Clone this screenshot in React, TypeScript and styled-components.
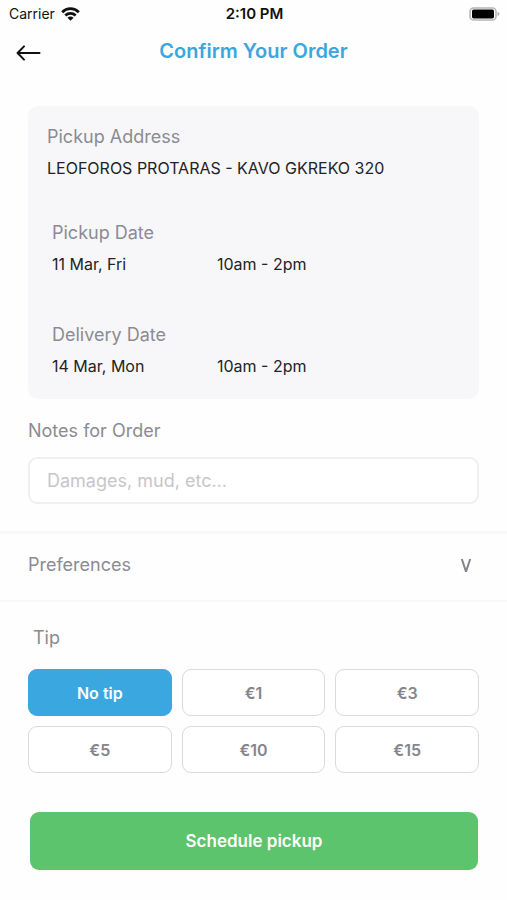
import React, { useState } from "react";
import styled, { createGlobalStyle } from "styled-components";

const GlobalStyle = createGlobalStyle`
  *, *::before, *::after { box-sizing: border-box; }
  body {
    margin: 0;
    background: #fefefe;
    color: #222326;
    font-family: Inter, "Liberation Sans", sans-serif;
    font-size: 16px;
    line-height: 24px;
  }
  button, input { font: inherit; color: inherit; }
`;

const StatusBar = styled.div`
  display: grid;
  grid-template-columns: 1fr auto 1fr;
  align-items: center;
  height: 28px;
  padding: 0 7px 0 9px;
  font-size: 14px;
  color: #111;
`;

const Carrier = styled.div`
  display: flex;
  align-items: center;
  gap: 6px;
`;

const Clock = styled.time`
  font-size: 15px;
  font-weight: 600;
`;

const Battery = styled.svg`
  justify-self: end;
`;

const Header = styled.header`
  display: grid;
  grid-template-columns: 48px 1fr 48px;
  align-items: center;
  height: 46px;
`;

const BackButton = styled.button`
  display: flex;
  align-items: center;
  justify-content: flex-end;
  height: 46px;
  padding: 4px 7px 0 0;
  border: 0;
  background: none;
  cursor: pointer;
`;

const Title = styled.h1`
  margin: 0;
  text-align: center;
  font-size: 20px;
  font-weight: 600;
  color: #3aa7dc;
`;

const Section = styled.section`
  padding: 0 28px;
`;

const Card = styled(Section)`
  display: flex;
  flex-direction: column;
  gap: 41px;
  margin: 32px 28px 0;
  padding: 19px 19px 21px;
  border-radius: 10px;
  background: #f7f7fa;
`;

const Group = styled.div`
  display: flex;
  flex-direction: column;
  gap: 7px;
`;

const Dates = styled.div`
  display: flex;
  flex-direction: column;
  gap: 47px;
  padding-left: 5px;
`;

const Label = styled.h2`
  margin: 0;
  font-size: 18px;
  font-weight: 400;
  color: #8b8b92;
`;

const Value = styled.div`
  font-size: 16px;
`;

const Slot = styled.div`
  display: grid;
  grid-template-columns: 2fr 3fr;
  column-gap: 3px;
`;

const FieldLabel = styled.label`
  display: block;
  margin: 20px 0 14px;
  font-size: 18px;
  color: #8b8b92;
`;

const NotesInput = styled.input`
  display: block;
  width: 100%;
  height: 47px;
  padding: 0 17px;
  border: 2px solid #efeff0;
  border-radius: 9px;
  background: #fff;
  font-size: 18px;
  outline: none;
  &::placeholder { color: #c6c6c9; opacity: 1; }
`;

const Preferences = styled.button`
  display: flex;
  align-items: center;
  justify-content: space-between;
  width: 100%;
  height: 71px;
  margin-top: 27px;
  padding: 0 35px 4px 28px;
  border: 0;
  border-top: 3px solid #f8f8f8;
  border-bottom: 2px solid #f8f8f8;
  background: none;
  font-size: 18px;
  color: #8b8b92;
  cursor: pointer;
`;

const TipSection = styled.fieldset`
  margin: 0;
  padding: 0 28px;
  border: 0;
  min-width: 0;
`;

const TipLegend = styled.legend`
  padding: 24px 5px 19px;
  font-size: 18px;
  color: #8b8b92;
`;

const TipGrid = styled.div`
  display: grid;
  grid-template-columns: repeat(3, 1fr);
  gap: 10px;
`;

const TipButton = styled.button<{ $selected: boolean }>`
  height: 47px;
  padding: 0;
  border: 1px solid ${(p) => (p.$selected ? "#3aa7e0" : "#dadadd")};
  border-radius: 9px;
  background: ${(p) => (p.$selected ? "#3aa7e0" : "#fff")};
  color: ${(p) => (p.$selected ? "#fff" : "#85858b")};
  font-size: 16px;
  font-weight: 600;
  cursor: pointer;
`;

const Footer = styled.div`
  padding: 39px 29px 30px 30px;
`;

const SubmitButton = styled.button`
  display: block;
  width: 100%;
  height: 58px;
  border: 0;
  border-radius: 9px;
  background: #5cc46d;
  color: #fff;
  font-size: 17px;
  font-weight: 600;
  cursor: pointer;
`;

const dates = [
  { label: "Pickup Date", day: "11 Mar, Fri", time: "10am - 2pm" },
  { label: "Delivery Date", day: "14 Mar, Mon", time: "10am - 2pm" },
];

const tips = ["No tip", "€1", "€3", "€5", "€10", "€15"];

export default function App() {
  const [tip, setTip] = useState("No tip");
  return (
    <>
      <GlobalStyle />
      <StatusBar>
        <Carrier>
          <span>Carrier</span>
          <svg width="19" height="14" viewBox="0 0 19 14" aria-hidden="true">
            <g fill="none" stroke="#111" strokeWidth="2.7">
              <path d="M1.2 5.2C5.8 0.5 13.2 0.5 17.8 5.2" />
              <path d="M4.3 8.5C7.2 5.7 11.8 5.7 14.7 8.5" />
            </g>
            <path d="M6.4 10.8Q9.5 8.2 12.6 10.8L9.5 13.8Z" fill="#111" />
          </svg>
        </Carrier>
        <Clock>2:10 PM</Clock>
        <Battery width="31" height="15" viewBox="0 0 31 15" aria-hidden="true">
          <rect x="1" y="1" width="26" height="12" rx="3.6" fill="#fff" stroke="#b5b5b5" strokeWidth="1.6" />
          <rect x="3" y="2.6" width="22" height="8.8" rx="1.6" fill="#000" />
          <path d="M28.5 4.8Q30.5 5.4 30.5 7T28.5 9.2Z" fill="#b5b5b5" />
        </Battery>
      </StatusBar>
      <Header>
        <BackButton type="button" aria-label="Back">
          <svg width="25" height="16" viewBox="0 0 25 16" fill="none" stroke="#111" strokeWidth="2" strokeLinecap="round" strokeLinejoin="round" aria-hidden="true">
            <path d="M23.5 8H1.8M8 1.4L1.6 8L8 14.6" />
          </svg>
        </BackButton>
        <Title>Confirm Your Order</Title>
      </Header>
      <main>
        <Card>
          <Group>
            <Label>Pickup Address</Label>
            <Value>LEOFOROS PROTARAS - KAVO GKREKO 320</Value>
          </Group>
          <Dates>
            {dates.map((d) => (
              <Group key={d.label}>
                <Label>{d.label}</Label>
                <Slot>
                  <Value>{d.day}</Value>
                  <Value>{d.time}</Value>
                </Slot>
              </Group>
            ))}
          </Dates>
        </Card>
        <Section>
          <FieldLabel htmlFor="notes">Notes for Order</FieldLabel>
          <NotesInput id="notes" type="text" placeholder="Damages, mud, etc..." />
        </Section>
        <Preferences type="button" aria-expanded="false">
          <span>Preferences</span>
          <svg width="12" height="16" viewBox="0 0 12 16" fill="none" stroke="#85858b" strokeWidth="2" strokeLinejoin="bevel" aria-hidden="true">
            <path d="M1.8 2L6 14.6L10.2 2" />
          </svg>
        </Preferences>
        <TipSection>
          <TipLegend>Tip</TipLegend>
          <TipGrid>
            {tips.map((t) => (
              <TipButton key={t} type="button" $selected={t === tip} aria-pressed={t === tip} onClick={() => setTip(t)}>
                {t}
              </TipButton>
            ))}
          </TipGrid>
        </TipSection>
        <Footer>
          <SubmitButton type="button">Schedule pickup</SubmitButton>
        </Footer>
      </main>
    </>
  );
}
